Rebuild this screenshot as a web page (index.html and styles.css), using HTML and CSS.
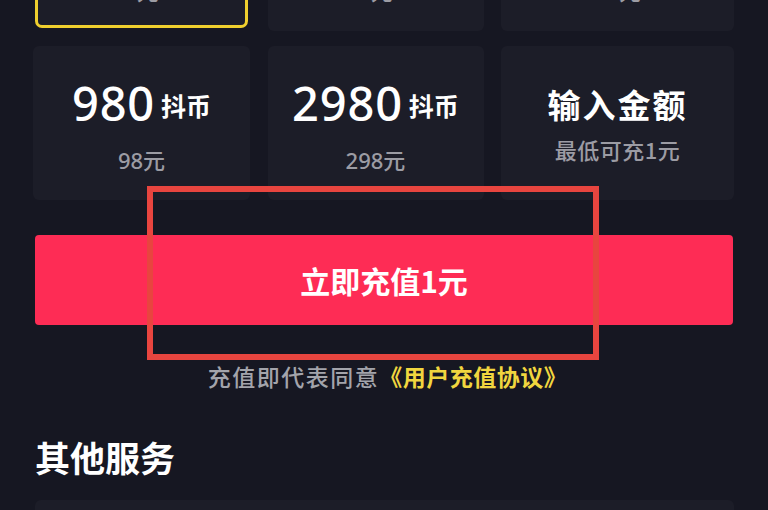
FILE: index.html
```html
<!DOCTYPE html>
<html lang="zh">
<head>
<meta charset="utf-8">
<title>充值</title>
<link rel="stylesheet" href="styles.css">
</head>
<body>
<div class="page">
  <div class="grid">
    <div class="card selected">
      <div class="amount"><span class="num">10</span><span class="unit">抖币</span></div>
      <div class="sub">1元</div>
    </div>
    <div class="card">
      <div class="amount"><span class="num">60</span><span class="unit">抖币</span></div>
      <div class="sub">6元</div>
    </div>
    <div class="card">
      <div class="amount"><span class="num">300</span><span class="unit">抖币</span></div>
      <div class="sub">30元</div>
    </div>
    <div class="card">
      <div class="amount"><span class="num">980</span><span class="unit">抖币</span></div>
      <div class="sub">98元</div>
    </div>
    <div class="card">
      <div class="amount"><span class="num">2980</span><span class="unit">抖币</span></div>
      <div class="sub">298元</div>
    </div>
    <div class="card custom">
      <div class="title">输入金额</div>
      <div class="hint">最低可充1元</div>
    </div>
  </div>

  <div class="pay-btn">立即充值1元</div>

  <div class="agree"><span class="gray">充值即代表同意</span><span class="link">《用户充值协议》</span></div>

  <h2 class="heading">其他服务</h2>

  <div class="service-card"></div>
</div>
<div class="annotation"></div>
</body>
</html>
```

FILE: styles.css
```css
html, body {
  margin: 0;
  padding: 0;
}
body {
  width: 768px;
  height: 510px;
  overflow: hidden;
  background: #161722;
  color: #ffffff;
  font-family: "Noto Sans CJK SC", "Noto Sans", sans-serif;
}
.page {
  padding: 0 34px 0 33px;
}
.grid {
  display: grid;
  grid-template-columns: 217px 216px 233px;
  column-gap: 17.5px;
  row-gap: 15px;
  margin-top: -123px;
}
.card {
  box-sizing: border-box;
  height: 154px;
  background: #1c1d28;
  border-radius: 6px;
  display: flex;
  flex-direction: column;
  align-items: center;
}
.card.selected {
  border: 3px solid #efcf2e;
  border-radius: 7px;
  margin: 0 2px 3px 2px;
  height: 151px;
}
.amount {
  margin-top: 32px;
  height: 50px;
  line-height: 50px;
  display: flex;
  align-items: center;
  gap: 6px;
}
.num {
  font-family: "Noto Sans", "Open Sans", sans-serif;
  font-size: 47px;
  font-weight: 500;
  letter-spacing: 0.8px;
}
.unit {
  font-size: 25px;
  font-weight: 700;
  line-height: 25px;
  margin-top: 5px;
}
.sub {
  margin-top: 20px;
  line-height: 24px;
  font-size: 22px;
  color: #9c9ca4;
  font-family: "Noto Sans", "Noto Sans CJK SC", sans-serif;
  font-weight: 500;
}
.selected .amount {
  margin-top: 29px;
}
.title {
  margin-top: 38px;
  line-height: 40px;
  font-size: 33px;
  font-weight: 700;
  letter-spacing: 2px;
}
.hint {
  margin-top: 13px;
  line-height: 24px;
  font-size: 22px;
  font-weight: 500;
  color: #9c9ca4;
  letter-spacing: 0.5px;
}
.pay-btn {
  margin: 35px 1px 0 2px;
  height: 90px;
  background: #fe2c55;
  border-radius: 4px;
  display: flex;
  align-items: center;
  justify-content: center;
  font-size: 30px;
  font-weight: 600;
  color: #ffffff;
}
.agree {
  margin-top: 36px;
  line-height: 30px;
  text-align: center;
  font-size: 23px;
  font-weight: 500;
  padding-left: 8px;
}
.agree .gray {
  color: #a3a4ab;
  letter-spacing: 1.5px;
}
.agree .link {
  color: #f1d63f;
  font-weight: 600;
  letter-spacing: 0.5px;
}
.heading {
  margin: 44px 0 0 2px;
  line-height: 44px;
  font-size: 35px;
  font-weight: 700;
}
.service-card {
  margin: 21px 0 0 2px;
  height: 60px;
  background: #1c1d28;
  border-radius: 6px;
}
.annotation {
  position: absolute;
  left: 147px;
  top: 186px;
  width: 452px;
  height: 174px;
  box-sizing: border-box;
  border: 6px solid #e8453f;
}
```
